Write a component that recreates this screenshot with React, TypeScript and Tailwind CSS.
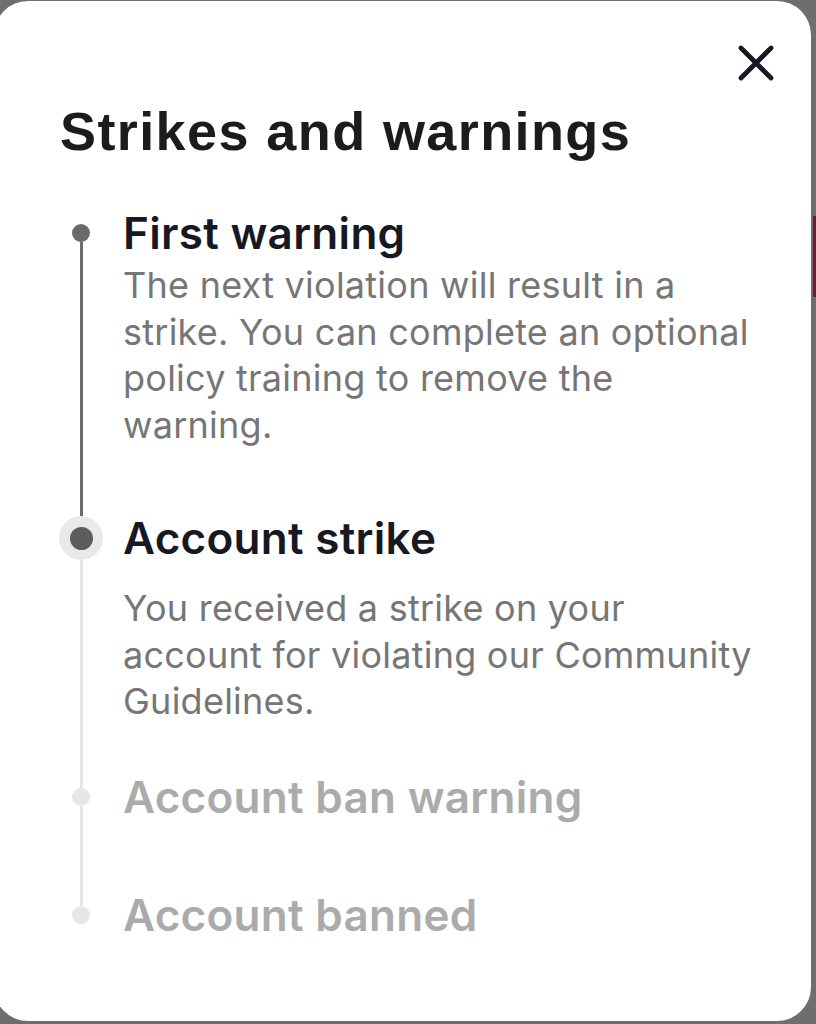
const STEPS = [
  {
    title: 'First warning',
    body: 'The next violation will result in a strike. You can complete an optional policy training to remove the warning.',
    state: 'done',
    top: 'none',
    bottom: 'dark',
    pad: 'pb-[64px]',
  },
  {
    title: 'Account strike',
    body: 'You received a strike on your account for violating our Community Guidelines.',
    state: 'current',
    top: 'dark',
    bottom: 'light',
    pad: 'pb-[46px]',
  },
  {
    title: 'Account ban warning',
    body: '',
    state: 'todo',
    top: 'light',
    bottom: 'light',
    pad: 'pb-[66px]',
  },
  {
    title: 'Account banned',
    body: '',
    state: 'todo',
    top: 'light',
    bottom: 'none',
    pad: '',
  },
];

const lineColor = (c: string) =>
  c === 'dark' ? 'bg-[#6b6b6b]' : c === 'light' ? 'bg-[#e6e6e9]' : 'bg-transparent';

function Marker({ state, top, bottom }: { state: string; top: string; bottom: string }) {
  const current = state === 'current';
  return (
    <div className="w-[42px] shrink-0 flex flex-col items-center self-stretch">
      <div className={`w-[3px] ${current ? 'h-[4px]' : 'h-[17px]'} ${lineColor(top)}`} />
      {current ? (
        <div className="w-[44px] h-[44px] rounded-full bg-[#e9e9eb] flex items-center justify-center">
          <div className="w-[23px] h-[23px] rounded-full bg-[#5c5c5e]" />
        </div>
      ) : (
        <div
          className={`w-[18px] h-[18px] rounded-full ${
            state === 'done' ? 'bg-[#6b6b6b]' : 'bg-[#e6e6e9]'
          }`}
        />
      )}
      <div className={`w-[3px] flex-1 ${lineColor(bottom)}`} />
    </div>
  );
}

export default function App() {
  return (
    <div className="w-[816px] h-[1024px] bg-[#6e6e6e] flex overflow-hidden">
      <div className="w-[817px] h-[1020px] ml-[-6px] mt-[1px] shrink-0 bg-white rounded-[34px] flex flex-col pl-[66px]">
        <div className="flex justify-end pt-[44px] pr-[37px]">
          <svg width="36" height="36" viewBox="0 0 36 36" fill="none">
            <path
              d="M3 3L33 33M33 3L3 33"
              stroke="#161823"
              strokeWidth="4.8"
              strokeLinecap="round"
            />
          </svg>
        </div>

        <h1 className="mt-[20px] font-['Liberation_Sans',Arial,sans-serif] font-bold text-[54px] leading-[60px] tracking-[1.4px] text-[#1c1c1e]">
          Strikes and warnings
        </h1>

        <ol className="mt-[46px] flex flex-col font-['Inter',sans-serif]">
          {STEPS.map((s) => (
            <li key={s.title} className="flex gap-[21px]">
              <Marker state={s.state} top={s.top} bottom={s.bottom} />
              <div className={`flex-1 pr-[50px] ${s.pad}`}>
                <p
                  className={`text-[44px] leading-[52px] font-semibold tracking-[0.3px] ${
                    s.state === 'todo' ? 'text-[#ababab]' : 'text-[#161823]'
                  }`}
                >
                  {s.title}
                </p>
                {s.body && (
                  <p
                    className={`${
                      s.state === 'current' ? 'mt-[21px]' : 'mt-[3px]'
                    } text-[36px] leading-[46.5px] tracking-[0.25px] text-[#767676]`}
                  >
                    {s.body}
                  </p>
                )}
              </div>
            </li>
          ))}
        </ol>
      </div>
      <div className="w-[5px] shrink-0 flex flex-col">
        <div className="ml-[2px] mt-[216px] w-[3px] h-[81px] bg-[#7a1430]" />
      </div>
    </div>
  );
}
